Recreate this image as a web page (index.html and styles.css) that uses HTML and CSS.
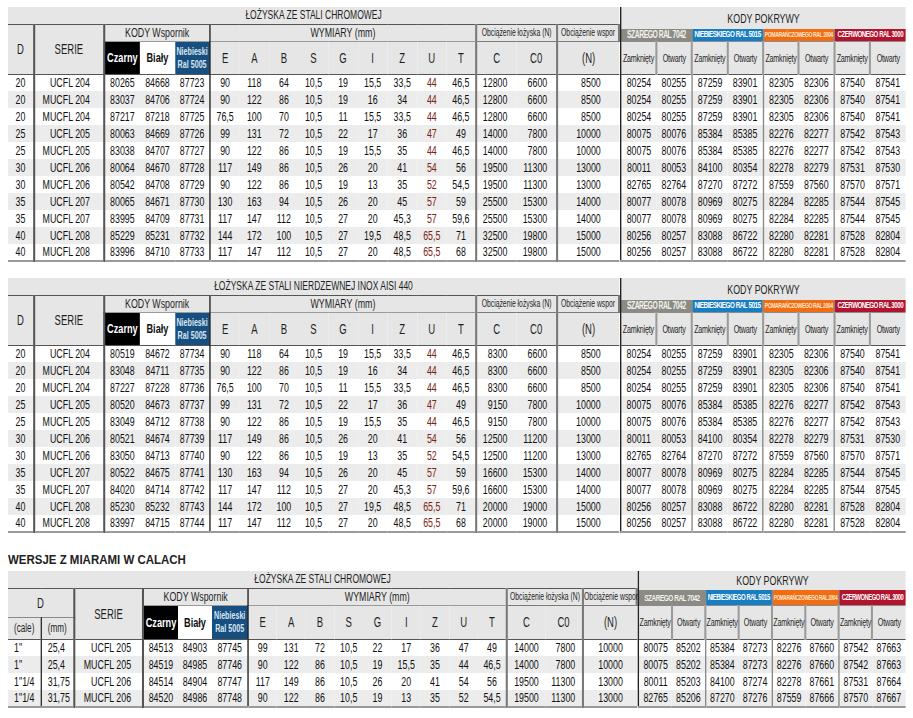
FILE: index.html
```html
<!DOCTYPE html>
<html lang="pl">
<head>
<meta charset="utf-8">
<title>Łożyska UCFL / MUCFL</title>
<link rel="stylesheet" href="styles.css">
</head>
<body>
<div class="sheet">

<section class="block">
<table class="main">
<colgroup>
<col class="w-d"><col class="w-serie"><col class="w-k1"><col class="w-k2"><col class="w-k3">
<col class="w-dim w-e"><col class="w-dim"><col class="w-dim"><col class="w-dim"><col class="w-dim"><col class="w-dim"><col class="w-dim"><col class="w-dim"><col class="w-dim">
<col class="w-c"><col class="w-c0"><col class="w-n">
</colgroup>
<thead>
<tr class="r-title"><th colspan="17" class="title">ŁOŻYSKA ZE STALI CHROMOWEJ</th></tr>
<tr class="r-grp">
<th rowspan="2" class="lab hb">D</th>
<th rowspan="2" class="lab hb">SERIE</th>
<th colspan="3" class="grp">KODY Wspornik</th>
<th colspan="9" class="grp">WYMIARY (mm)</th>
<th colspan="2" class="grp small">Obciążenie łożyska (N)</th>
<th class="grp small">Obciążenie wspor</th>
</tr>
<tr class="r-col">
<th class="sw sw-black">Czarny</th><th class="sw sw-white">Biały</th><th class="sw sw-blue">Niebieski<br>Ral 5005</th>
<th class="lab hb">E</th><th class="lab hb">A</th><th class="lab hb">B</th><th class="lab hb">S</th><th class="lab hb">G</th><th class="lab hb">I</th><th class="lab hb">Z</th><th class="lab hb">U</th><th class="lab hb">T</th>
<th class="lab hb">C</th><th class="lab hb">C0</th><th class="lab hb">(N)</th>
</tr>
</thead>
<tbody>
<tr><td>20</td><td class="serie">UCFL 204</td><td>80265</td><td>84668</td><td>87723</td><td>90</td><td>118</td><td>64</td><td>10,5</td><td>19</td><td>15,5</td><td>33,5</td><td class="u">44</td><td>46,5</td><td class="c">12800</td><td class="c">6600</td><td class="n">8500</td></tr>
<tr><td>20</td><td class="serie">MUCFL 204</td><td>83037</td><td>84706</td><td>87724</td><td>90</td><td>122</td><td>86</td><td>10,5</td><td>19</td><td>16</td><td>34</td><td class="u">44</td><td>46,5</td><td class="c">12800</td><td class="c">6600</td><td class="n">8500</td></tr>
<tr><td>20</td><td class="serie">MUCFL 204</td><td>87217</td><td>87218</td><td>87725</td><td>76,5</td><td>100</td><td>70</td><td>10,5</td><td>11</td><td>15,5</td><td>33,5</td><td class="u">44</td><td>46,5</td><td class="c">12800</td><td class="c">6600</td><td class="n">8500</td></tr>
<tr><td>25</td><td class="serie">UCFL 205</td><td>80063</td><td>84669</td><td>87726</td><td>99</td><td>131</td><td>72</td><td>10,5</td><td>22</td><td>17</td><td>36</td><td class="u">47</td><td>49</td><td class="c">14000</td><td class="c">7800</td><td class="n">10000</td></tr>
<tr><td>25</td><td class="serie">MUCFL 205</td><td>83038</td><td>84707</td><td>87727</td><td>90</td><td>122</td><td>86</td><td>10,5</td><td>19</td><td>15,5</td><td>35</td><td class="u">44</td><td>46,5</td><td class="c">14000</td><td class="c">7800</td><td class="n">10000</td></tr>
<tr><td>30</td><td class="serie">UCFL 206</td><td>80064</td><td>84670</td><td>87728</td><td>117</td><td>149</td><td>86</td><td>10,5</td><td>26</td><td>20</td><td>41</td><td class="u">54</td><td>56</td><td class="c">19500</td><td class="c">11300</td><td class="n">13000</td></tr>
<tr><td>30</td><td class="serie">MUCFL 206</td><td>80542</td><td>84708</td><td>87729</td><td>90</td><td>122</td><td>86</td><td>10,5</td><td>19</td><td>13</td><td>35</td><td class="u">52</td><td>54,5</td><td class="c">19500</td><td class="c">11300</td><td class="n">13000</td></tr>
<tr><td>35</td><td class="serie">UCFL 207</td><td>80065</td><td>84671</td><td>87730</td><td>130</td><td>163</td><td>94</td><td>10,5</td><td>26</td><td>20</td><td>45</td><td class="u">57</td><td>59</td><td class="c">25500</td><td class="c">15300</td><td class="n">14000</td></tr>
<tr><td>35</td><td class="serie">MUCFL 207</td><td>83995</td><td>84709</td><td>87731</td><td>117</td><td>147</td><td>112</td><td>10,5</td><td>27</td><td>20</td><td>45,3</td><td class="u">57</td><td>59,6</td><td class="c">25500</td><td class="c">15300</td><td class="n">14000</td></tr>
<tr><td>40</td><td class="serie">UCFL 208</td><td>85229</td><td>85231</td><td>87732</td><td>144</td><td>172</td><td>100</td><td>10,5</td><td>27</td><td>19,5</td><td>48,5</td><td class="u">65,5</td><td>71</td><td class="c">32500</td><td class="c">19800</td><td class="n">15000</td></tr>
<tr><td>40</td><td class="serie">MUCFL 208</td><td>83996</td><td>84710</td><td>87733</td><td>117</td><td>147</td><td>112</td><td>10,5</td><td>27</td><td>20</td><td>48,5</td><td class="u">65,5</td><td>68</td><td class="c">32500</td><td class="c">19800</td><td class="n">15000</td></tr>
</tbody>
</table>

<table class="covers">
<colgroup><col><col><col class="g"><col><col class="g"><col><col class="g"><col></colgroup>
<thead>
<tr class="r-kp"><th colspan="8" class="kp">KODY POKRYWY</th></tr>
<tr class="r-band">
<th colspan="2" class="band b-grey">SZAREGO RAL 7042</th>
<th colspan="2" class="band b-blue">NIEBIESKIEGO RAL 5015</th>
<th colspan="2" class="band b-orange">POMARAŃCZOWEGO RAL 2004</th>
<th colspan="2" class="band b-red">CZERWONEGO RAL 3000</th>
</tr>
<tr class="r-col">
<th class="zo">Zamknięty</th><th class="zo">Otwarty</th><th class="zo">Zamknięty</th><th class="zo">Otwarty</th><th class="zo">Zamknięty</th><th class="zo">Otwarty</th><th class="zo">Zamknięty</th><th class="zo">Otwarty</th>
</tr>
</thead>
<tbody>
<tr><td>80254</td><td>80255</td><td>87259</td><td>83901</td><td>82305</td><td>82306</td><td>87540</td><td>87541</td></tr>
<tr><td>80254</td><td>80255</td><td>87259</td><td>83901</td><td>82305</td><td>82306</td><td>87540</td><td>87541</td></tr>
<tr><td>80254</td><td>80255</td><td>87259</td><td>83901</td><td>82305</td><td>82306</td><td>87540</td><td>87541</td></tr>
<tr><td>80075</td><td>80076</td><td>85384</td><td>85385</td><td>82276</td><td>82277</td><td>87542</td><td>87543</td></tr>
<tr><td>80075</td><td>80076</td><td>85384</td><td>85385</td><td>82276</td><td>82277</td><td>87542</td><td>87543</td></tr>
<tr><td>80011</td><td>80053</td><td>84100</td><td>80354</td><td>82278</td><td>82279</td><td>87531</td><td>87530</td></tr>
<tr><td>82765</td><td>82764</td><td>87270</td><td>87272</td><td>87559</td><td>87560</td><td>87570</td><td>87571</td></tr>
<tr><td>80077</td><td>80078</td><td>80969</td><td>80275</td><td>82284</td><td>82285</td><td>87544</td><td>87545</td></tr>
<tr><td>80077</td><td>80078</td><td>80969</td><td>80275</td><td>82284</td><td>82285</td><td>87544</td><td>87545</td></tr>
<tr><td>80256</td><td>80257</td><td>83088</td><td>86722</td><td>82280</td><td>82281</td><td>87528</td><td>82804</td></tr>
<tr><td>80256</td><td>80257</td><td>83088</td><td>86722</td><td>82280</td><td>82281</td><td>87528</td><td>82804</td></tr>
</tbody>
</table>
</section>

<section class="block">
<table class="main">
<colgroup>
<col class="w-d"><col class="w-serie"><col class="w-k1"><col class="w-k2"><col class="w-k3">
<col class="w-dim w-e"><col class="w-dim"><col class="w-dim"><col class="w-dim"><col class="w-dim"><col class="w-dim"><col class="w-dim"><col class="w-dim"><col class="w-dim">
<col class="w-c"><col class="w-c0"><col class="w-n">
</colgroup>
<thead>
<tr class="r-title"><th colspan="17" class="title">ŁOŻYSKA ZE STALI NIERDZEWNEJ INOX AISI 440</th></tr>
<tr class="r-grp">
<th rowspan="2" class="lab hb">D</th>
<th rowspan="2" class="lab hb">SERIE</th>
<th colspan="3" class="grp">KODY Wspornik</th>
<th colspan="9" class="grp">WYMIARY (mm)</th>
<th colspan="2" class="grp small">Obciążenie łożyska (N)</th>
<th class="grp small">Obciążenie wspor</th>
</tr>
<tr class="r-col">
<th class="sw sw-black">Czarny</th><th class="sw sw-white">Biały</th><th class="sw sw-blue">Niebieski<br>Ral 5005</th>
<th class="lab hb">E</th><th class="lab hb">A</th><th class="lab hb">B</th><th class="lab hb">S</th><th class="lab hb">G</th><th class="lab hb">I</th><th class="lab hb">Z</th><th class="lab hb">U</th><th class="lab hb">T</th>
<th class="lab hb">C</th><th class="lab hb">C0</th><th class="lab hb">(N)</th>
</tr>
</thead>
<tbody>
<tr><td>20</td><td class="serie">UCFL 204</td><td>80519</td><td>84672</td><td>87734</td><td>90</td><td>118</td><td>64</td><td>10,5</td><td>19</td><td>15,5</td><td>33,5</td><td class="u">44</td><td>46,5</td><td class="c">8300</td><td class="c">6600</td><td class="n">8500</td></tr>
<tr><td>20</td><td class="serie">MUCFL 204</td><td>83048</td><td>84711</td><td>87735</td><td>90</td><td>122</td><td>86</td><td>10,5</td><td>19</td><td>16</td><td>34</td><td class="u">44</td><td>46,5</td><td class="c">8300</td><td class="c">6600</td><td class="n">8500</td></tr>
<tr><td>20</td><td class="serie">MUCFL 204</td><td>87227</td><td>87228</td><td>87736</td><td>76,5</td><td>100</td><td>70</td><td>10,5</td><td>11</td><td>15,5</td><td>33,5</td><td class="u">44</td><td>46,5</td><td class="c">8300</td><td class="c">6600</td><td class="n">8500</td></tr>
<tr><td>25</td><td class="serie">UCFL 205</td><td>80520</td><td>84673</td><td>87737</td><td>99</td><td>131</td><td>72</td><td>10,5</td><td>22</td><td>17</td><td>36</td><td class="u">47</td><td>49</td><td class="c">9150</td><td class="c">7800</td><td class="n">10000</td></tr>
<tr><td>25</td><td class="serie">MUCFL 205</td><td>83049</td><td>84712</td><td>87738</td><td>90</td><td>122</td><td>86</td><td>10,5</td><td>19</td><td>15,5</td><td>35</td><td class="u">44</td><td>46,5</td><td class="c">9150</td><td class="c">7800</td><td class="n">10000</td></tr>
<tr><td>30</td><td class="serie">UCFL 206</td><td>80521</td><td>84674</td><td>87739</td><td>117</td><td>149</td><td>86</td><td>10,5</td><td>26</td><td>20</td><td>41</td><td class="u">54</td><td>56</td><td class="c">12500</td><td class="c">11200</td><td class="n">13000</td></tr>
<tr><td>30</td><td class="serie">MUCFL 206</td><td>83050</td><td>84713</td><td>87740</td><td>90</td><td>122</td><td>86</td><td>10,5</td><td>19</td><td>13</td><td>35</td><td class="u">52</td><td>54,5</td><td class="c">12500</td><td class="c">11200</td><td class="n">13000</td></tr>
<tr><td>35</td><td class="serie">UCFL 207</td><td>80522</td><td>84675</td><td>87741</td><td>130</td><td>163</td><td>94</td><td>10,5</td><td>26</td><td>20</td><td>45</td><td class="u">57</td><td>59</td><td class="c">16600</td><td class="c">15300</td><td class="n">14000</td></tr>
<tr><td>35</td><td class="serie">MUCFL 207</td><td>84020</td><td>84714</td><td>87742</td><td>117</td><td>147</td><td>112</td><td>10,5</td><td>27</td><td>20</td><td>45,3</td><td class="u">57</td><td>59,6</td><td class="c">16600</td><td class="c">15300</td><td class="n">14000</td></tr>
<tr><td>40</td><td class="serie">UCFL 208</td><td>85230</td><td>85232</td><td>87743</td><td>144</td><td>172</td><td>100</td><td>10,5</td><td>27</td><td>19,5</td><td>48,5</td><td class="u">65,5</td><td>71</td><td class="c">20000</td><td class="c">19000</td><td class="n">15000</td></tr>
<tr><td>40</td><td class="serie">MUCFL 208</td><td>83997</td><td>84715</td><td>87744</td><td>117</td><td>147</td><td>112</td><td>10,5</td><td>27</td><td>20</td><td>48,5</td><td class="u">65,5</td><td>68</td><td class="c">20000</td><td class="c">19000</td><td class="n">15000</td></tr>
</tbody>
</table>

<table class="covers">
<colgroup><col><col><col class="g"><col><col class="g"><col><col class="g"><col></colgroup>
<thead>
<tr class="r-kp"><th colspan="8" class="kp">KODY POKRYWY</th></tr>
<tr class="r-band">
<th colspan="2" class="band b-grey">SZAREGO RAL 7042</th>
<th colspan="2" class="band b-blue">NIEBIESKIEGO RAL 5015</th>
<th colspan="2" class="band b-orange">POMARAŃCZOWEGO RAL 2004</th>
<th colspan="2" class="band b-red">CZERWONEGO RAL 3000</th>
</tr>
<tr class="r-col">
<th class="zo">Zamknięty</th><th class="zo">Otwarty</th><th class="zo">Zamknięty</th><th class="zo">Otwarty</th><th class="zo">Zamknięty</th><th class="zo">Otwarty</th><th class="zo">Zamknięty</th><th class="zo">Otwarty</th>
</tr>
</thead>
<tbody>
<tr><td>80254</td><td>80255</td><td>87259</td><td>83901</td><td>82305</td><td>82306</td><td>87540</td><td>87541</td></tr>
<tr><td>80254</td><td>80255</td><td>87259</td><td>83901</td><td>82305</td><td>82306</td><td>87540</td><td>87541</td></tr>
<tr><td>80254</td><td>80255</td><td>87259</td><td>83901</td><td>82305</td><td>82306</td><td>87540</td><td>87541</td></tr>
<tr><td>80075</td><td>80076</td><td>85384</td><td>85385</td><td>82276</td><td>82277</td><td>87542</td><td>87543</td></tr>
<tr><td>80075</td><td>80076</td><td>85384</td><td>85385</td><td>82276</td><td>82277</td><td>87542</td><td>87543</td></tr>
<tr><td>80011</td><td>80053</td><td>84100</td><td>80354</td><td>82278</td><td>82279</td><td>87531</td><td>87530</td></tr>
<tr><td>82765</td><td>82764</td><td>87270</td><td>87272</td><td>87559</td><td>87560</td><td>87570</td><td>87571</td></tr>
<tr><td>80077</td><td>80078</td><td>80969</td><td>80275</td><td>82284</td><td>82285</td><td>87544</td><td>87545</td></tr>
<tr><td>80077</td><td>80078</td><td>80969</td><td>80275</td><td>82284</td><td>82285</td><td>87544</td><td>87545</td></tr>
<tr><td>80256</td><td>80257</td><td>83088</td><td>86722</td><td>82280</td><td>82281</td><td>87528</td><td>82804</td></tr>
<tr><td>80256</td><td>80257</td><td>83088</td><td>86722</td><td>82280</td><td>82281</td><td>87528</td><td>82804</td></tr>
</tbody>
</table>
</section>

<h2 class="section-title">WERSJE Z MIARAMI W CALACH</h2>

<section class="block inch">
<table class="main">
<colgroup>
<col class="w-cale"><col class="w-mm"><col class="w-serie"><col class="w-k1"><col class="w-k2"><col class="w-k3">
<col class="w-dim w-e"><col class="w-dim"><col class="w-dim"><col class="w-dim"><col class="w-dim"><col class="w-dim"><col class="w-dim"><col class="w-dim"><col class="w-dim">
<col class="w-c"><col class="w-c0"><col class="w-n">
</colgroup>
<thead>
<tr class="r-title"><th colspan="18" class="title">ŁOŻYSKA ZE STALI CHROMOWEJ</th></tr>
<tr class="r-grp">
<th colspan="2" rowspan="2" class="lab hd">D</th>
<th rowspan="3" class="lab hb">SERIE</th>
<th colspan="3" class="grp">KODY Wspornik</th>
<th colspan="9" class="grp">WYMIARY (mm)</th>
<th colspan="2" class="grp small">Obciążenie łożyska (N)</th>
<th class="grp small">Obciążenie wspor</th>
</tr>
<tr class="r-mid">
<th rowspan="2" class="sw sw-black">Czarny</th><th rowspan="2" class="sw sw-white">Biały</th><th rowspan="2" class="sw sw-blue">Niebieski<br>Ral 5005</th>
<th rowspan="2" class="lab hb">E</th><th rowspan="2" class="lab hb">A</th><th rowspan="2" class="lab hb">B</th><th rowspan="2" class="lab hb">S</th><th rowspan="2" class="lab hb">G</th><th rowspan="2" class="lab hb">I</th><th rowspan="2" class="lab hb">Z</th><th rowspan="2" class="lab hb">U</th><th rowspan="2" class="lab hb">T</th>
<th rowspan="2" class="lab hb">C</th><th rowspan="2" class="lab hb">C0</th><th rowspan="2" class="lab hb">(N)</th>
</tr>
<tr class="r-sub"><th class="unit hb">(cale)</th><th class="unit hb">(mm)</th></tr>
</thead>
<tbody>
<tr><td class="cale">1"</td><td class="cale">25,4</td><td class="serie">UCFL 205</td><td>84513</td><td>84903</td><td>87745</td><td>99</td><td>131</td><td>72</td><td>10,5</td><td>22</td><td>17</td><td>36</td><td>47</td><td>49</td><td>14000</td><td class="c">7800</td><td>10000</td></tr>
<tr><td class="cale">1"</td><td class="cale">25,4</td><td class="serie">MUCFL 205</td><td>84519</td><td>84985</td><td>87746</td><td>90</td><td>122</td><td>86</td><td>10,5</td><td>19</td><td>15,5</td><td>35</td><td>44</td><td>46,5</td><td>14000</td><td class="c">7800</td><td>10000</td></tr>
<tr><td class="cale">1"1/4</td><td class="cale">31,75</td><td class="serie">UCFL 206</td><td>84514</td><td>84904</td><td>87747</td><td>117</td><td>149</td><td>86</td><td>10,5</td><td>26</td><td>20</td><td>41</td><td>54</td><td>56</td><td>19500</td><td class="c">11300</td><td>13000</td></tr>
<tr><td class="cale">1"1/4</td><td class="cale">31,75</td><td class="serie">MUCFL 206</td><td>84520</td><td>84986</td><td>87748</td><td>90</td><td>122</td><td>86</td><td>10,5</td><td>19</td><td>13</td><td>35</td><td>52</td><td>54,5</td><td>19500</td><td class="c">11300</td><td>13000</td></tr>
</tbody>
</table>

<table class="covers">
<colgroup><col><col><col class="g"><col><col class="g"><col><col class="g"><col></colgroup>
<thead>
<tr class="r-kp"><th colspan="8" class="kp">KODY POKRYWY</th></tr>
<tr class="r-band">
<th colspan="2" class="band b-grey">SZAREGO RAL 7042</th>
<th colspan="2" class="band b-blue">NIEBIESKIEGO RAL 5015</th>
<th colspan="2" class="band b-orange">POMARAŃCZOWEGO RAL 2004</th>
<th colspan="2" class="band b-red">CZERWONEGO RAL 3000</th>
</tr>
<tr class="r-col">
<th class="zo">Zamknięty</th><th class="zo">Otwarty</th><th class="zo">Zamknięty</th><th class="zo">Otwarty</th><th class="zo">Zamknięty</th><th class="zo">Otwarty</th><th class="zo">Zamknięty</th><th class="zo">Otwarty</th>
</tr>
</thead>
<tbody>
<tr><td>80075</td><td>85202</td><td>85384</td><td>87273</td><td>82276</td><td>87660</td><td>87542</td><td>87663</td></tr>
<tr><td>80075</td><td>85202</td><td>85384</td><td>87273</td><td>82276</td><td>87660</td><td>87542</td><td>87663</td></tr>
<tr><td>80011</td><td>85203</td><td>84100</td><td>87274</td><td>82278</td><td>87661</td><td>87531</td><td>87664</td></tr>
<tr><td>82765</td><td>85206</td><td>87270</td><td>87276</td><td>87559</td><td>87666</td><td>87570</td><td>87667</td></tr>
</tbody>
</table>
</section>

</div>
</body>
</html>
```

FILE: styles.css
```css
* { box-sizing: border-box; }
html, body { background: #ffffff; }
body {
  margin: 0;
  padding: 7px 8px 0;
  font-family: "Liberation Sans", Arial, sans-serif;
  color: #1b1b1b;
  overflow: hidden;
}

/* The source sheet uses a condensed face; the table rows are laid out
   at full width and compressed horizontally to get the same proportions. */
.block {
  display: flex;
  align-items: flex-start;
  width: 1320px;
  transform: scaleX(0.68);
  transform-origin: 0 0;
}
.block + .block { margin-top: 16px; }

.section-title {
  margin: 19px 0 3px;
  font-size: 13.5px;
  line-height: 16px;
  font-weight: 700;
  color: #222;
  transform: scaleX(0.85);
  transform-origin: 0 0;
  width: 240px;
}

table { border-collapse: collapse; table-layout: fixed; }
th, td {
  padding: 0;
  white-space: nowrap;
  text-align: center;
  vertical-align: middle;
  font-weight: 400;
}

.main { width: 898px; }
.covers { width: 421px; border-left: 2px solid #222; }
.inch .main { width: 925px; }
.inch .covers { width: 396px; }

/* column widths & vertical rules (unscaled units) */
col.w-d { width: 38px; border-right: 3px solid #555; }
col.w-serie { width: 103px; border-right: 3px solid #555; }
col.w-k1 { width: 53px; }
col.w-k2, col.w-k3 { width: 51.5px; }
col.w-dim { width: 43.5px; }
col.w-e { border-left: 2px solid #222; }
col.w-c { width: 59px; border-left: 3px solid #777; }
col.w-c0 { width: 60px; }
col.w-n { width: 91px; border-left: 3px solid #777; }

.inch col.w-cale { width: 48.5px; border-right: 2px solid #333; }
.inch col.w-mm { width: 48.5px; border-right: 3px solid #555; }
.inch col.w-serie { width: 101.5px; }
.inch col.w-k1 { width: 51.5px; }
.inch col.w-k2 { width: 50px; }
.inch col.w-k3 { width: 53px; }
.inch col.w-dim { width: 42.3px; }
.inch col.w-c { width: 56px; }
.inch col.w-c0 { width: 56px; }
.inch col.w-n { width: 79px; }

.covers col.g { border-left: 2px solid #8a8a8a; }

/* header */
thead th { background: #e6e6e6; color: #1f1f1f; }
.r-title { height: 17px; }
.r-grp { height: 17px; }
.r-col { height: 33px; }
.r-mid { height: 12px; }
.r-sub { height: 22px; }
.r-kp { height: 22px; }
.r-band { height: 12px; }
.inch .r-kp { height: 19px; }
.inch .r-band { height: 15px; }
.inch .covers .r-col { height: 34px; }

.title { font-size: 12.5px; border-bottom: 1px solid #555; }
.grp { font-size: 13px; border-bottom: 1px solid #9a9a9a; }
.grp.small { font-size: 10px; border: 1px solid #7a7a7a; border-left-width: 3px; border-right-width: 3px; }
.lab { font-size: 14px; }
.hb { border-bottom: 1px solid #555; }
.hd { border-bottom: 1px solid #8a8a8a; }
.unit { font-size: 12px; }

.sw { font-weight: 700; border-bottom: 1px solid #555; }
thead .sw-black { background: #000; color: #fff; font-size: 13.5px; }
thead .sw-white { background: #fff; color: #111; font-size: 13.5px; }
thead .sw-blue { background: #174f80; color: #d9e6f2; font-size: 10.5px; line-height: 13px; }

.kp { font-size: 13px; }
.band {
  font-size: 10px;
  line-height: 11px;
  font-weight: 700;
  letter-spacing: -0.7px;
  border-bottom: 1px solid #8a8a8a;
}
thead .b-grey { background: #8b8b83; color: #f2f2ee; }
thead .b-blue { background: #177ec2; color: #ffffff; font-size: 9.3px; }
thead .b-orange { background: #f06d14; color: #ffe4c8; font-size: 7.6px; }
thead .b-red { background: #b2132d; color: #ffffff; font-size: 9px; }
.inch .band { font-size: 9.5px; }
.inch .b-blue { font-size: 8.8px; }
.inch .b-orange { font-size: 7.2px; }
.inch .b-red { font-size: 8.5px; }

.zo {
  font-size: 10.5px;
  letter-spacing: -0.3px;
  border-left: 3px solid #9a9a9a;
  border-bottom: 1px solid #555;
}
.covers thead .zo:first-child { border-left: 0; }

/* body */
tbody tr { height: 17px; }
tbody td { font-size: 13px; line-height: 16px; color: #111111; }
tbody tr:nth-child(even) td { background: #ececec; }
tbody tr:last-child td { border-bottom: 2px solid #9a9a9a; }

.serie { text-align: right; padding-right: 19px; }
.inch .serie { padding-right: 16px; }
.c { text-align: right; padding-right: 13px; }
.inch .c { padding-right: 10px; }
.n { text-align: right; padding-right: 27px; }
.u { color: #7a2410; }
.cale { text-align: left; padding-left: 9px; }
```
